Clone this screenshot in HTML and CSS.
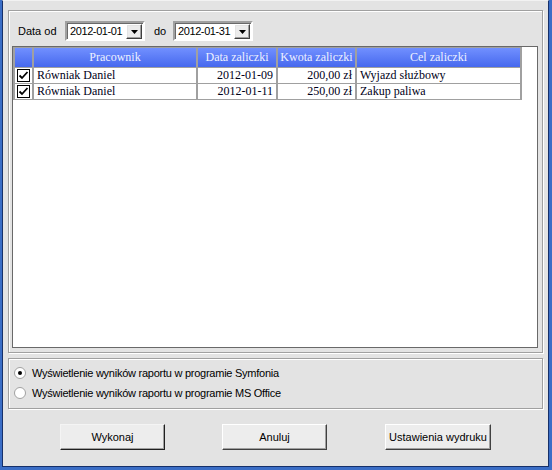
FILE: index.html
```html
<!DOCTYPE html>
<html>
<head>
<meta charset="utf-8">
<link rel="stylesheet" href="styles.css">
</head>
<body>
<div class="window">
  <div class="client">
    <div class="group main">
      <div class="filter">
        <span class="lbl lbl-od">Data od</span>
        <div class="combo">
          <span class="val">2012-01-01</span>
          <span class="drop"><svg width="7" height="4" viewBox="0 0 7 4"><path d="M0 0h7L3.5 4z" fill="#000"/></svg></span>
        </div>
        <span class="lbl lbl-do">do</span>
        <div class="combo">
          <span class="val">2012-01-31</span>
          <span class="drop"><svg width="7" height="4" viewBox="0 0 7 4"><path d="M0 0h7L3.5 4z" fill="#000"/></svg></span>
        </div>
      </div>
      <div class="listbox">
        <div class="grid">
          <div class="hd"></div>
          <div class="hd">Pracownik</div>
          <div class="hd">Data zaliczki</div>
          <div class="hd">Kwota zaliczki</div>
          <div class="hd">Cel zaliczki</div>

          <div class="cell chk"><span class="box"><svg width="11" height="11" viewBox="0 0 11 11"><path d="M1.5 5.5l2.5 2.5l5.5-6" fill="none" stroke="#000" stroke-width="1.8"/></svg></span></div>
          <div class="cell">Równiak Daniel</div>
          <div class="cell r">2012-01-09</div>
          <div class="cell r">200,00 zł</div>
          <div class="cell">Wyjazd służbowy</div>

          <div class="cell chk"><span class="box"><svg width="11" height="11" viewBox="0 0 11 11"><path d="M1.5 5.5l2.5 2.5l5.5-6" fill="none" stroke="#000" stroke-width="1.8"/></svg></span></div>
          <div class="cell">Równiak Daniel</div>
          <div class="cell r">2012-01-11</div>
          <div class="cell r">250,00 zł</div>
          <div class="cell">Zakup paliwa</div>
        </div>
      </div>
    </div>

    <div class="group radios">
      <div class="radio">
        <svg class="rb" width="12" height="12" viewBox="0 0 12 12">
          <circle cx="6" cy="6" r="5.5" fill="#fff" stroke="#a0a0a0"/>
          <circle cx="6" cy="6" r="2" fill="#000"/>
        </svg>
        <span>Wyświetlenie wyników raportu w programie Symfonia</span>
      </div>
      <div class="radio">
        <svg class="rb" width="12" height="12" viewBox="0 0 12 12">
          <circle cx="6" cy="6" r="5.5" fill="#fff" stroke="#a0a0a0"/>
        </svg>
        <span>Wyświetlenie wyników raportu w programie MS Office</span>
      </div>
    </div>

    <div class="buttons">
      <button class="btn b1">Wykonaj</button>
      <button class="btn b2">Anuluj</button>
      <button class="btn b3">Ustawienia wydruku</button>
    </div>
  </div>
</div>
</body>
</html>
```

FILE: styles.css
```css
* { box-sizing: border-box; }
html, body { margin: 0; padding: 0; }
body { width: 552px; height: 470px; overflow: hidden; background: #3b6ec6; }

.window {
  width: 552px;
  height: 470px;
  display: flex;
  padding: 0 3px 3px 2px;
  background: #3b6ec6;
}
.client {
  flex: 1;
  display: flex;
  flex-direction: column;
  background: #e3e3e3;
  border-top: 1px solid #f2f2f2;
  border-left: 1px solid #16306a;
  border-right: 1px solid #16306a;
  border-bottom: 1px solid #16306a;
  font-family: "Liberation Sans", Arial, sans-serif;
  font-size: 11px;
  color: #000;
}

.group {
  border: 1px solid #a0a0a0;
  box-shadow: inset 1px 1px 0 #fff, 1px 1px 0 #fff;
  margin: 0 5px;
}
.main {
  margin-top: 9px;
  height: 343px;
  display: flex;
  flex-direction: column;
  padding: 10px 4px 4px 3px;
}

.filter {
  display: flex;
  align-items: center;
  height: 20px;
  margin-bottom: 5px;
  padding-left: 6px;
}
.lbl { line-height: 20px; }
.lbl-od { width: 47px; }
.lbl-do { width: 19px; margin-left: 9px; }

.combo {
  width: 80px;
  height: 20px;
  display: flex;
  align-items: stretch;
  background: #fff;
  border: 2px solid;
  border-color: #a0a0a0 #fff #fff #a0a0a0;
  box-shadow: inset 1px 1px 0 #696969;
}
.combo .val {
  flex: 1;
  padding-left: 3px;
  padding-top: 1px;
  line-height: 15px;
  letter-spacing: -0.4px;
}
.combo .drop {
  width: 16px;
  margin: 1px 1px 0 0;
  display: flex;
  align-items: center;
  justify-content: center;
  background: #ececec;
  border: 1px solid;
  border-color: #fff #404040 #404040 #fff;
  box-shadow: inset -1px -1px 0 #a0a0a0, inset 1px 1px 0 #e3e3e3;
}

.listbox {
  flex: 1;
  background: #fff;
  border: 1px solid #696969;
}

.grid {
  display: inline-grid;
  grid-template-columns: 17px 162px 78px 77px 163px;
  grid-template-rows: 19px 15px 15px;
  column-gap: 2px;
  row-gap: 1px;
  padding: 0 2px 1px 2px;
  border-top: 1px solid #a0a0a0;
  background: #a0a0a0;
  font-family: "Liberation Serif", "Times New Roman", serif;
  font-size: 12px;
}
.hd {
  background: linear-gradient(#7190ff, #4668ee);
  color: #eef1ff;
  text-align: center;
  line-height: 19px;
  white-space: nowrap;
  overflow: hidden;
}
.cell {
  background: #fff;
  color: #000018;
  line-height: 15px;
  padding: 0 2px 0 3px;
  white-space: nowrap;
  overflow: hidden;
}
.cell.r { text-align: right; padding-right: 3px; }
.cell.chk { padding: 0; display: flex; align-items: center; justify-content: center; }
.box {
  width: 13px;
  height: 13px;
  border: 1px solid #000;
  background: #fff;
  display: flex;
  align-items: center;
  justify-content: center;
}

.radios {
  margin-top: 5px;
  height: 51px;
  padding: 4px 0 0 5px;
}
.radio {
  display: flex;
  align-items: center;
  height: 20px;
  letter-spacing: -0.25px;
}
.rb { margin-right: 6px; flex: none; }

.buttons {
  display: flex;
  margin-top: 15px;
  padding-left: 57px;
}
.btn {
  height: 26px;
  width: 105px;
  padding: 0;
  font-family: "Liberation Sans", Arial, sans-serif;
  font-size: 11px;
  color: #000;
  background: #ededed;
  border: 1px solid;
  border-color: #fff #404040 #404040 #fff;
  box-shadow: inset -1px -1px 0 #a0a0a0;
}
.b1 { border-color: #f4f4f4 #202020 #202020 #f4f4f4; }
.b2 { margin-left: 57px; }
.b3 { margin-left: 58px; width: 106px; }
```
